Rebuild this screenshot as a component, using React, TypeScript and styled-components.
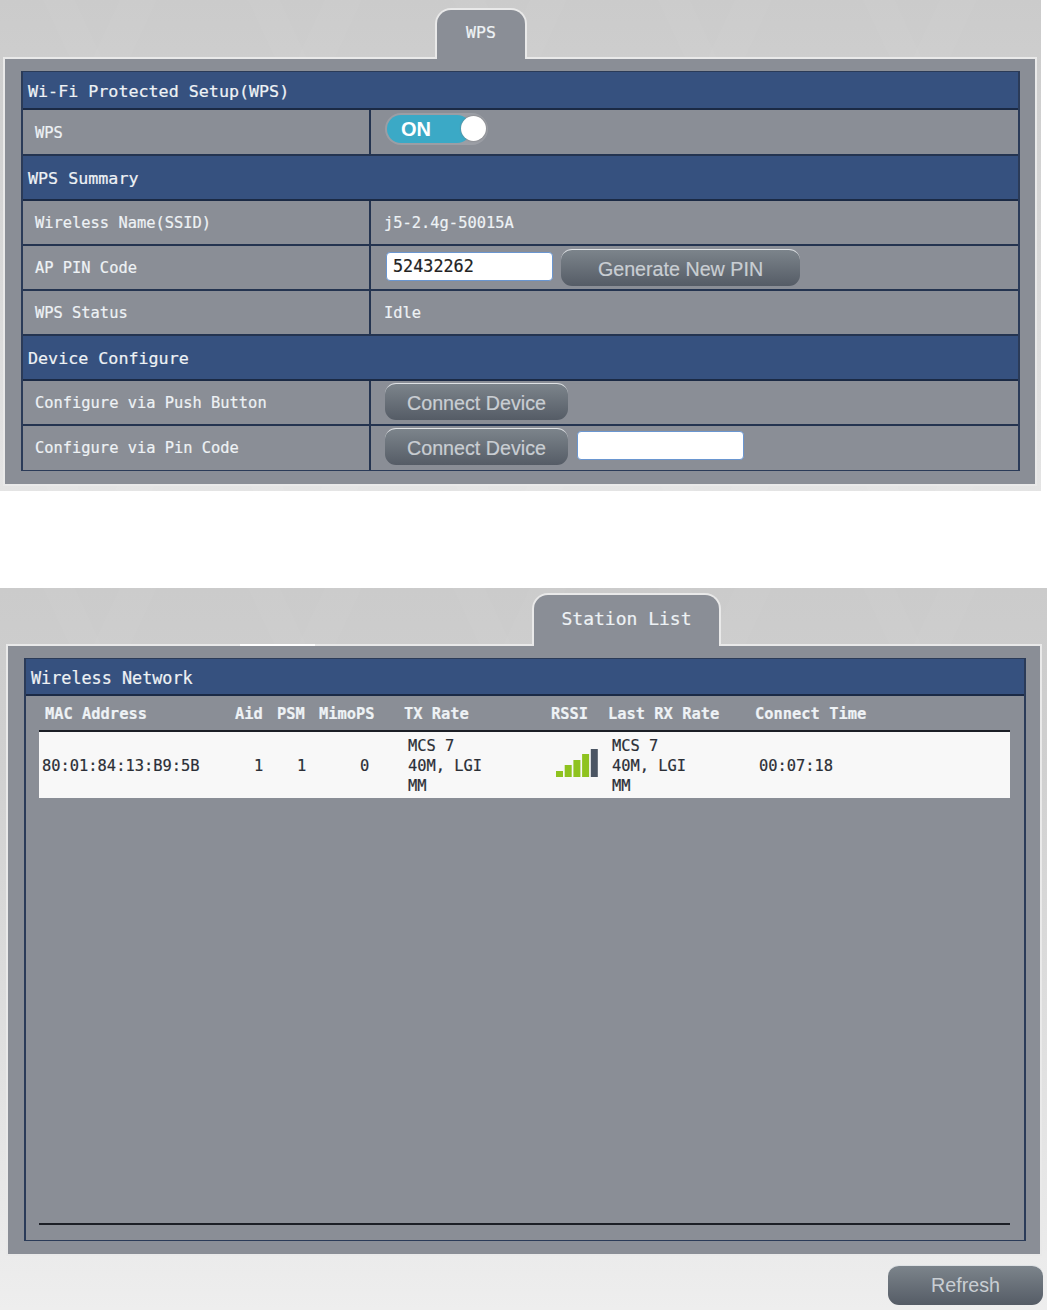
import styled, { createGlobalStyle } from 'styled-components';

const mono = `"DejaVu Sans Mono", "Liberation Mono", monospace`;

const GlobalStyle = createGlobalStyle`
  html, body {
    margin: 0;
    padding: 0;
    background: #fff;
  }
`;

const Page = styled.div`
  width: 1047px;
  height: 1310px;
  overflow: hidden;
  display: flex;
  flex-direction: column;
  gap: 97px;
`;

const Section = styled.section<{ $width: number; $height: number; $top: number; $left: number; $end: string }>`
  box-sizing: border-box;
  width: ${({ $width }) => $width}px;
  height: ${({ $height }) => $height}px;
  padding: ${({ $top }) => $top}px 0 0 ${({ $left }) => $left}px;
  background:
    linear-gradient(115deg, transparent 46%, rgba(255, 255, 255, 0.025) 46% 60%, transparent 60%) 0 0 / 205px 120px,
    linear-gradient(245deg, transparent 50%, rgba(255, 255, 255, 0.02) 50% 62%, transparent 62%) 0 0 / 205px 120px,
    linear-gradient(180deg, #cbcbcb 0%, #d0d0d0 25%, ${({ $end }) => $end} 100%);
`;

const TabRow = styled.div<{ $offset: number }>`
  display: flex;
  padding-left: ${({ $offset }) => $offset}px;
  margin-bottom: -2px;
  position: relative;
  z-index: 1;
`;

const Tab = styled.div<{ $width: number; $height: number; $size: number; $lift: number }>`
  box-sizing: border-box;
  width: ${({ $width }) => $width}px;
  height: ${({ $height }) => $height}px;
  display: flex;
  align-items: center;
  justify-content: center;
  padding-bottom: ${({ $lift }) => $lift}px;
  background: #8a8e96;
  border: 2px solid #e9e9e9;
  border-bottom: none;
  border-radius: 16px 16px 0 0;
  color: #eef2f5;
  font: ${({ $size }) => $size}px ${mono};
  -webkit-text-stroke: 0.2px #eef2f5;
`;

const Panel = styled.div<{ $width: number; $height: number; $right: number }>`
  position: relative;
  box-sizing: border-box;
  width: ${({ $width }) => $width}px;
  height: ${({ $height }) => $height}px;
  padding: 12px ${({ $right }) => $right}px 0 16px;
  background: #8a8e96;
  border: 2px solid #e9e9e9;
`;

const Glint = styled.span`
  position: absolute;
  top: -2px;
  left: 232px;
  width: 75px;
  height: 2px;
  background: #fff;
`;

const Table = styled.div<{ $height?: number }>`
  box-sizing: border-box;
  display: flex;
  flex-direction: column;
  height: ${({ $height }) => ($height ? `${$height}px` : 'auto')};
  border: 2px solid #2b3b58;
  border-width: 1px 2px;
  color: #eef2f5;
  font-family: ${mono};
  -webkit-text-stroke: 0.2px currentColor;
`;

const Heading = styled.div<{ $height: number; $size: number; $shift?: number }>`
  box-sizing: border-box;
  height: ${({ $height }) => $height}px;
  display: flex;
  align-items: center;
  padding: ${({ $shift }) => $shift ?? 0}px 0 0 5px;
  background: #36517f;
  border-bottom: 2px solid #1b2a45;
  font-size: ${({ $size }) => $size}px;
`;

const Row = styled.div<{ $height: number }>`
  box-sizing: border-box;
  height: ${({ $height }) => $height}px;
  display: flex;
  border-bottom: 2px solid #243450;

  &:last-child {
    border-bottom: none;
  }
`;

const Label = styled.div<{ $shift?: number }>`
  box-sizing: border-box;
  width: 348px;
  display: flex;
  align-items: center;
  padding: ${({ $shift }) => $shift ?? 0}px 0 0 12px;
  border-right: 2px solid #243450;
  font-size: 15.4px;
`;

const Value = styled.div<{ $text?: boolean }>`
  flex: 1;
  display: flex;
  align-items: center;
  gap: 8px;
  padding-left: ${({ $text }) => ($text ? 13 : 14)}px;
  font-size: 15.4px;
`;

const Toggle = styled.div`
  box-sizing: border-box;
  width: 103px;
  height: 32px;
  margin-top: -6px;
  padding: 2px;
  border-radius: 16px;
  background: #9b9ea5;
`;

const ToggleTrack = styled.div`
  position: relative;
  box-sizing: border-box;
  width: 84px;
  height: 28px;
  padding: 1px 0 0 14px;
  display: flex;
  align-items: center;
  border-radius: 14px;
  background: #3ba9c6;
  color: #fff;
  font: bold 20px "Liberation Sans", Arial, sans-serif;
  -webkit-text-stroke: 0;
`;

const Knob = styled.span`
  position: absolute;
  right: -15px;
  top: 1px;
  width: 25px;
  height: 25px;
  border-radius: 50%;
  background: #fff;
  box-shadow: 0 0 2px #777;
`;

const TextField = styled.input<{ $lift?: number }>`
  box-sizing: border-box;
  width: 167px;
  height: 29px;
  margin: ${({ $lift }) => $lift ?? -3}px 0 0 1px;
  padding: 0 6px;
  background: #fff;
  border: 1px solid #6a96d0;
  border-radius: 4px;
  color: #222;
  font: 16.8px ${mono};
  outline: none;
`;

const PushButton = styled.button<{ $width: number; $height?: number; $margin?: string; $drop?: number }>`
  box-sizing: border-box;
  width: ${({ $width }) => $width}px;
  height: ${({ $height }) => $height ?? 37}px;
  margin: ${({ $margin }) => $margin ?? '0'};
  padding: ${({ $drop }) => $drop ?? 2}px 0 0;
  background: linear-gradient(180deg, #7c848b 0%, #555c66 100%);
  border: none;
  border-top: 1px solid #dfe2e5;
  border-radius: 11px;
  color: #c9ced3;
  font: 19.7px "Liberation Sans", Arial, sans-serif;
`;

const Columns = styled.div`
  display: grid;
  grid-template-columns: 193px 42px 42px 85px 147px 57px 147px 1fr;
`;

const HeaderRow = styled(Columns)`
  box-sizing: border-box;
  height: 34px;
  margin: 0 14px 0 13px;
  padding-top: 2px;
  align-items: center;
  font-size: 15.4px;
  font-weight: bold;
`;

const HeaderCell = styled.div<{ $pad?: number }>`
  padding-left: ${({ $pad }) => $pad ?? 3}px;
  white-space: nowrap;
`;

const DataRow = styled(Columns)`
  box-sizing: border-box;
  height: 68px;
  margin: 0 14px 0 13px;
  padding-top: 2px;
  align-items: center;
  background: #f8f8f8;
  border-top: 2px solid #1c1f26;
  color: #2b2f36;
  font-size: 15.4px;
  line-height: 20px;
`;

const DataCell = styled.div<{ $pad: number }>`
  padding-left: ${({ $pad }) => $pad}px;
  white-space: nowrap;
`;

const Spacer = styled.div`
  flex: 1;
  margin: 0 14px 15px 13px;
  border-bottom: 2px solid #1c1f26;
`;

const Footer = styled.div`
  display: flex;
  justify-content: flex-end;
  padding: 9px 4px 0 0;
`;

const SignalSvg = styled.svg`
  display: block;
  margin-top: -6px;
`;

const SignalBars = () => (
  <SignalSvg width="42" height="28" viewBox="0 0 42 28">
    <rect x="0" y="22" width="7" height="6" fill="#8fc31f" />
    <rect x="8.7" y="16" width="7" height="12" fill="#8fc31f" />
    <rect x="17.4" y="11" width="7" height="17" fill="#8fc31f" />
    <rect x="26.1" y="5" width="7" height="23" fill="#8fc31f" />
    <rect x="34.8" y="0" width="7" height="28" fill="#4b5563" />
  </SignalSvg>
);

const App = () => (
  <Page>
    <GlobalStyle />
    <Section $width={1041} $height={491} $top={8} $left={3} $end="#e4e4e4">
      <TabRow $offset={432}>
        <Tab $width={92} $height={51} $size={16.5} $lift={4}>WPS</Tab>
      </TabRow>
      <Panel $width={1034} $height={429} $right={15}>
        <Table>
          <Heading $height={38} $size={16.7} $shift={2}>Wi-Fi Protected Setup(WPS)</Heading>
          <Row $height={46}>
            <Label $shift={2}>WPS</Label>
            <Value>
              <Toggle>
                <ToggleTrack>
                  ON
                  <Knob />
                </ToggleTrack>
              </Toggle>
            </Value>
          </Row>
          <Heading $height={45} $size={16.7}>WPS Summary</Heading>
          <Row $height={45}>
            <Label>Wireless Name(SSID)</Label>
            <Value $text>j5-2.4g-50015A</Value>
          </Row>
          <Row $height={45}>
            <Label>AP PIN Code</Label>
            <Value>
              <TextField defaultValue="52432262" />
              <PushButton $width={239}>Generate New PIN</PushButton>
            </Value>
          </Row>
          <Row $height={45}>
            <Label>WPS Status</Label>
            <Value $text>Idle</Value>
          </Row>
          <Heading $height={45} $size={16.7}>Device Configure</Heading>
          <Row $height={45}>
            <Label>Configure via Push Button</Label>
            <Value>
              <PushButton $width={183} $margin="-2px 0 0">Connect Device</PushButton>
            </Value>
          </Row>
          <Row $height={44}>
            <Label>Configure via Pin Code</Label>
            <Value>
              <PushButton $width={183} $margin="-3px 0 0">Connect Device</PushButton>
              <TextField $lift={-5} />
            </Value>
          </Row>
        </Table>
      </Panel>
    </Section>

    <Section $width={1047} $height={722} $top={5} $left={6} $end="#eeeeee">
      <TabRow $offset={526}>
        <Tab $width={189} $height={53} $size={18} $lift={4}>Station List</Tab>
      </TabRow>
      <Panel $width={1036} $height={612} $right={14}>
        <Glint />
        <Table $height={583}>
          <Heading $height={37} $size={16.8} $shift={2}>Wireless Network</Heading>
          <HeaderRow>
            <HeaderCell $pad={6}>MAC Address</HeaderCell>
            <HeaderCell>Aid</HeaderCell>
            <HeaderCell>PSM</HeaderCell>
            <HeaderCell>MimoPS</HeaderCell>
            <HeaderCell>TX Rate</HeaderCell>
            <HeaderCell>RSSI</HeaderCell>
            <HeaderCell>Last RX Rate</HeaderCell>
            <HeaderCell>Connect Time</HeaderCell>
          </HeaderRow>
          <DataRow>
            <DataCell $pad={3}>80:01:84:13:B9:5B</DataCell>
            <DataCell $pad={22}>1</DataCell>
            <DataCell $pad={23}>1</DataCell>
            <DataCell $pad={44}>0</DataCell>
            <DataCell $pad={7}>MCS 7<br />40M, LGI<br />MM</DataCell>
            <DataCell $pad={8}><SignalBars /></DataCell>
            <DataCell $pad={7}>MCS 7<br />40M, LGI<br />MM</DataCell>
            <DataCell $pad={7}>00:07:18</DataCell>
          </DataRow>
          <Spacer />
        </Table>
      </Panel>
      <Footer>
        <PushButton $width={155} $height={40} $drop={0}>Refresh</PushButton>
      </Footer>
    </Section>
  </Page>
);

export default App;
